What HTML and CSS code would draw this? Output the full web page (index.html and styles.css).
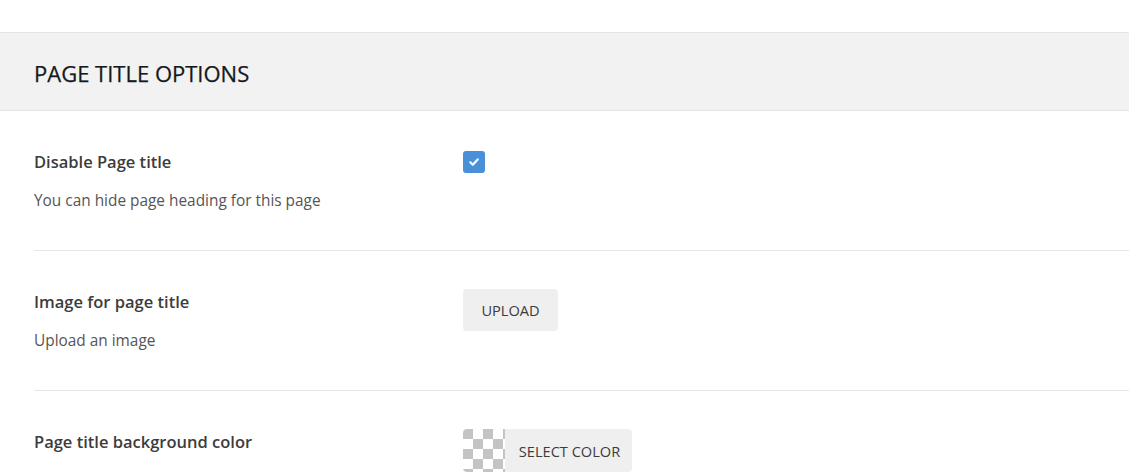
FILE: index.html
```html
<!DOCTYPE html>
<html>
<head>
<meta charset="utf-8">
<link rel="stylesheet" href="styles.css">
</head>
<body>
<div class="spacer"></div>
<div class="panel-head"><h2 class="panel-title">PAGE TITLE OPTIONS</h2></div>
<div class="options">
  <div class="row">
    <div class="info">
      <div class="label">Disable Page title</div>
      <div class="desc">You can hide page heading for this page</div>
    </div>
    <div class="control">
      <span class="checkbox"><svg width="12" height="12" viewBox="0 0 12 12"><path d="M2.3 6.3 L4.8 8.8 L9.7 3.4" fill="none" stroke="#fff" stroke-width="2.2" stroke-linecap="round" stroke-linejoin="round"/></svg></span>
    </div>
  </div>
  <div class="row">
    <div class="info">
      <div class="label">Image for page title</div>
      <div class="desc">Upload an image</div>
    </div>
    <div class="control">
      <button class="btn">UPLOAD</button>
    </div>
  </div>
  <div class="row">
    <div class="info">
      <div class="label">Page title background color</div>
    </div>
    <div class="control">
      <button class="btn color-btn"><span class="swatch"></span><span class="color-text">SELECT COLOR</span></button>
    </div>
  </div>
</div>
</body>
</html>
```

FILE: styles.css
```css
html, body {
  margin: 0;
  padding: 0;
  background: #fff;
  font-family: "Open Sans", "Noto Sans", sans-serif;
  color: #333;
  overflow: hidden;
}
.spacer { height: 32px; }
.panel-head {
  background: #f2f2f2;
  border-top: 1px solid #e4e4e4;
  border-bottom: 1px solid #e4e4e4;
  height: 77px;
  display: flex;
  align-items: center;
  padding-left: 34px;
}
.panel-title {
  margin: 0;
  font-size: 22px;
  font-weight: 500;
  color: #15191c;
  letter-spacing: 0;
  line-height: 26px;
  padding-top: 2px;
  -webkit-text-stroke: 0.25px #15191c;
}
.options { padding-left: 34px; }
.row {
  display: grid;
  grid-template-columns: 429px 1fr;
  height: 139px;
  border-bottom: 1px solid #e6e6e6;
  box-sizing: content-box;
}
.info { padding-top: 39px; }
.label {
  font-size: 16.5px;
  font-weight: 600;
  line-height: 24px;
  color: #3c3c3c;
}
.desc {
  margin-top: 16px;
  font-size: 15.4px;
  line-height: 22px;
  color: #555;
}
.control { padding-top: 38px; }
.checkbox {
  display: flex;
  align-items: center;
  justify-content: center;
  width: 22px;
  height: 22px;
  margin-top: 2px;
  background: #4a90d9;
  border-radius: 3px;
}
.btn {
  display: inline-flex;
  align-items: center;
  justify-content: center;
  height: 42px;
  width: 95px;
  border: none;
  border-radius: 4px;
  background: #efefef;
  font-family: "Open Sans", "Noto Sans", sans-serif;
  font-size: 14.6px;
  color: #3c3c3c;
  padding: 0;
  margin-top: 0;
}
.color-btn {
  width: 169px;
  height: 43px;
  justify-content: flex-start;
  overflow: hidden;
}
.swatch {
  width: 42px;
  height: 43px;
  background-color: #fff;
  background-image:
    linear-gradient(45deg, #c4c4c4 25%, transparent 25%, transparent 75%, #c4c4c4 75%),
    linear-gradient(45deg, #c4c4c4 25%, transparent 25%, transparent 75%, #c4c4c4 75%);
  background-size: 20px 20px;
  background-position: 10px 0, 0 10px;
  border-radius: 4px 0 0 4px;
}
.color-text {
  flex: 1;
  text-align: center;
  padding-left: 2px;
  color: #3c3c3c;
}
```
